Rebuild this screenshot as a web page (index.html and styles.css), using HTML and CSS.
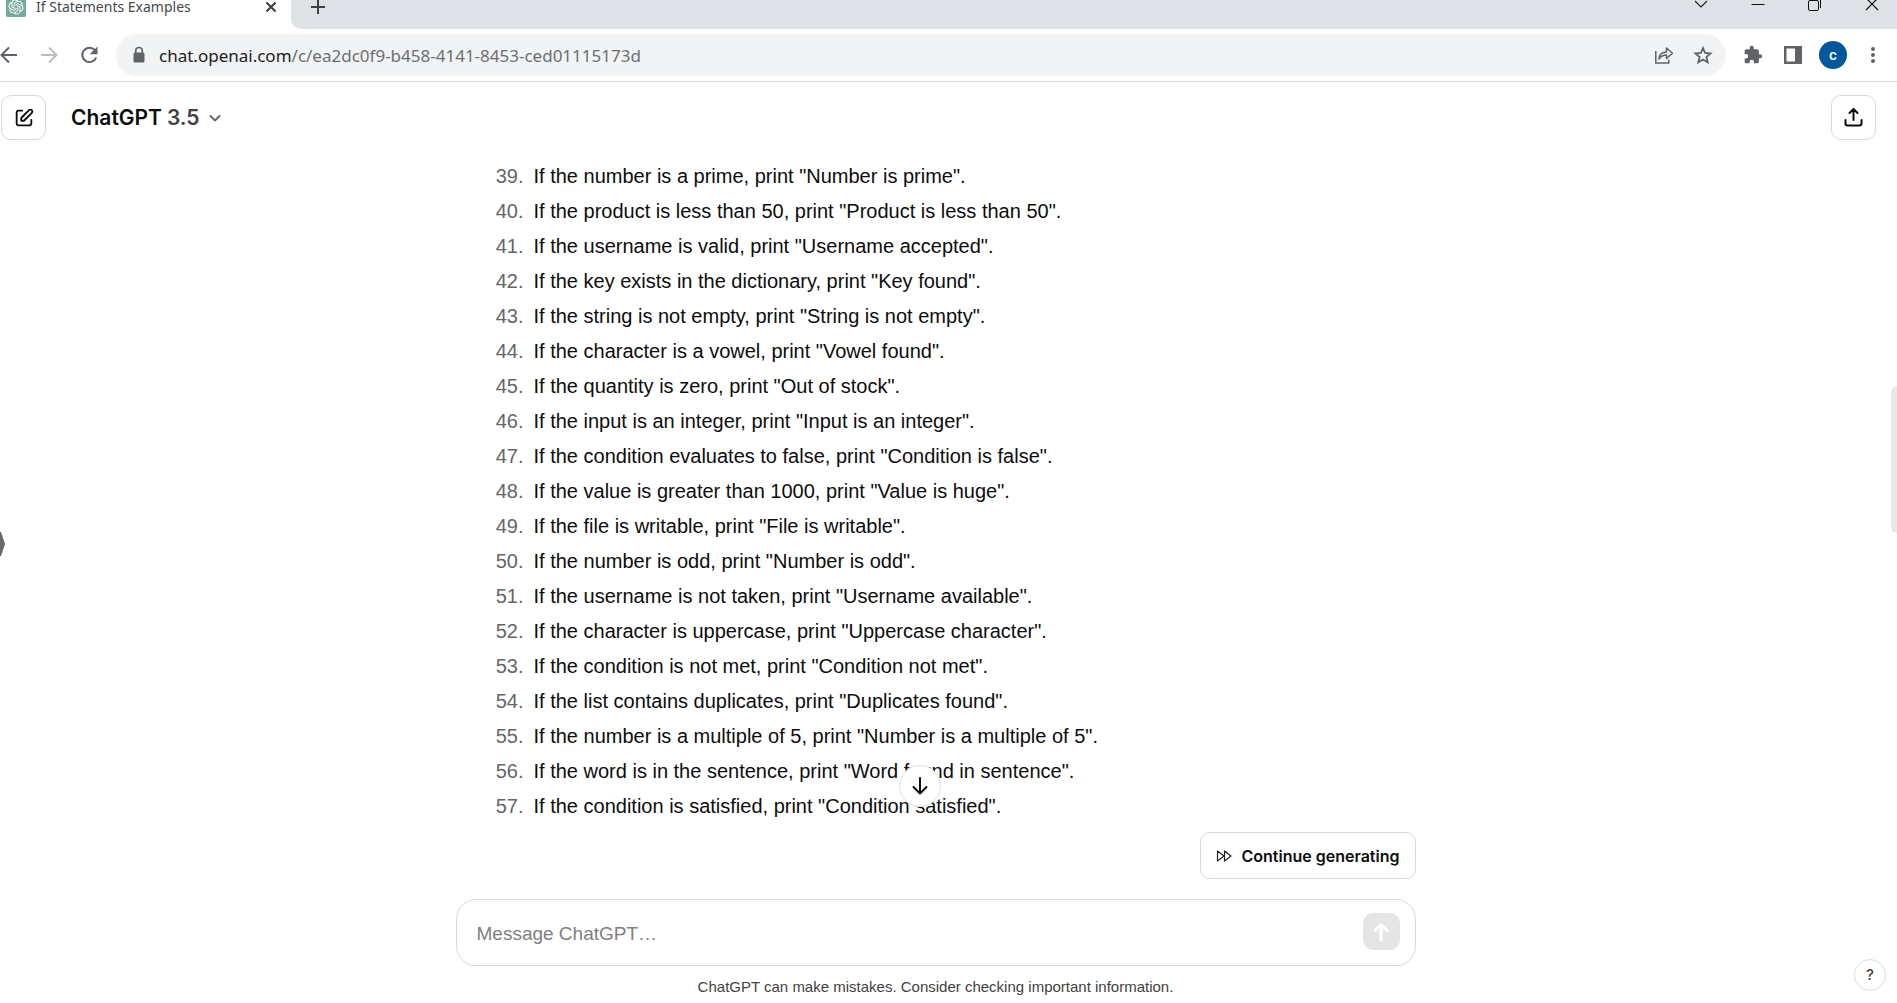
FILE: index.html
```html
<!DOCTYPE html>
<html lang="en">
<head>
<meta charset="utf-8">
<title>If Statements Examples</title>
<link rel="stylesheet" href="styles.css">
</head>
<body>
<div class="tabstrip">
  <div class="tab">
    <svg class="favicon" viewBox="0 0 24 24"><rect width="24" height="24" rx="2" fill="#74aa9c"/><path fill="#fff" transform="translate(3 3) scale(.75)" d="M22.2819 9.8211a5.9847 5.9847 0 0 0-.5157-4.9108 6.0462 6.0462 0 0 0-6.5098-2.9A6.0651 6.0651 0 0 0 4.9807 4.1818a5.9847 5.9847 0 0 0-3.9977 2.9 6.0462 6.0462 0 0 0 .7427 7.0966 5.98 5.98 0 0 0 .511 4.9107 6.051 6.051 0 0 0 6.5146 2.9001A5.9847 5.9847 0 0 0 13.2599 24a6.0557 6.0557 0 0 0 5.7718-4.2058 5.9894 5.9894 0 0 0 3.9977-2.9001 6.0557 6.0557 0 0 0-.7475-7.0729zm-9.022 12.6081a4.4755 4.4755 0 0 1-2.8764-1.0408l.1419-.0804 4.7783-2.7582a.7948.7948 0 0 0 .3927-.6813v-6.7369l2.02 1.1686a.071.071 0 0 1 .038.052v5.5826a4.504 4.504 0 0 1-4.4945 4.4944zm-9.6607-4.1254a4.4708 4.4708 0 0 1-.5346-3.0137l.142.0852 4.783 2.7582a.7712.7712 0 0 0 .7806 0l5.8428-3.3685v2.3324a.0804.0804 0 0 1-.0332.0615L9.74 19.9502a4.4992 4.4992 0 0 1-6.1408-1.6464zM2.3408 7.8956a4.485 4.485 0 0 1 2.3655-1.9728V11.6a.7664.7664 0 0 0 .3879.6765l5.8144 3.3543-2.0201 1.1685a.0757.0757 0 0 1-.071 0l-4.8303-2.7865A4.504 4.504 0 0 1 2.3408 7.872zm16.5963 3.8558L13.1038 8.364 15.1192 7.2a.0757.0757 0 0 1 .071 0l4.8303 2.7913a4.4944 4.4944 0 0 1-.6765 8.1042v-5.6772a.79.79 0 0 0-.407-.667zm2.0107-3.0231l-.142-.0852-4.7735-2.7818a.7759.7759 0 0 0-.7854 0L9.409 9.2297V6.8974a.0662.0662 0 0 1 .0284-.0615l4.8303-2.7866a4.4992 4.4992 0 0 1 6.6802 4.66zM8.3065 12.863l-2.02-1.1638a.0804.0804 0 0 1-.038-.0567V6.0742a4.4992 4.4992 0 0 1 7.3757-3.4537l-.142.0805L8.704 5.459a.7948.7948 0 0 0-.3927.6813zm1.0976-2.3654l2.602-1.4998 2.6069 1.4998v2.9994l-2.5974 1.4997-2.6067-1.4997Z"/></svg>
    <span class="tab-title">If Statements Examples</span>
    <button class="plain" aria-label="Close tab"><svg width="20" height="20" viewBox="0 0 20 20" fill="none" stroke="#3c4043" stroke-width="2"><path d="M5.500 5.500l9 9M14.500 5.500l-9 9"/></svg></button>
  </div>
  <div class="strip-rest">
    <button class="plain" aria-label="New tab"><svg width="20" height="20" viewBox="0 0 20 20" fill="none" stroke="#3c4043" stroke-width="2"><path d="M10 3v14M3 10h14"/></svg></button>
    <div class="window-buttons">
      <button class="plain" aria-label="Search tabs"><svg width="20" height="20" viewBox="0 0 20 20" fill="none" stroke="#222" stroke-width="1.200"><path d="M4 8l6 6 6-6"/></svg></button>
      <button class="plain" aria-label="Minimize"><svg width="20" height="20" viewBox="0 0 20 20" fill="none" stroke="#111" stroke-width="1"><path d="M3.500 11.500h13"/></svg></button>
      <button class="plain" aria-label="Restore"><svg width="20" height="20" viewBox="0 0 20 20" fill="none" stroke="#111" stroke-width="1"><rect x="3.500" y="7.500" width="10" height="10" rx="1.500"/><path d="M6 4.500h7.500q2 0 2 2V15"/></svg></button>
      <button class="plain" aria-label="Close"><svg width="20" height="20" viewBox="0 0 20 20" fill="none" stroke="#111" stroke-width="1.200"><path d="M4 5l12 12M16 5L4 17"/></svg></button>
    </div>
  </div>
</div>

<div class="toolbar">
  <div class="nav-buttons">
    <button class="plain" aria-label="Back"><svg width="20" height="20" viewBox="0 0 20 20" fill="none" stroke="#5f6368" stroke-width="2"><path d="M17 10H2M9 2.500L1.500 10 9 17.500"/></svg></button>
    <button class="plain" aria-label="Forward"><svg width="20" height="20" viewBox="0 0 20 20" fill="none" stroke="#babcbe" stroke-width="2"><path d="M1 10h15M9 2.500L16.500 10 9 17.500"/></svg></button>
    <button class="plain" aria-label="Reload"><svg width="20" height="20" viewBox="0 0 20 20"><path d="M14.800 5A7.200 7.200 0 1 0 16.200 12.500" fill="none" stroke="#5f6368" stroke-width="2"/><path d="M17.500 1.500v7.800H9.700z" fill="#5f6368"/></svg></button>
  </div>
  <div class="omnibox">
    <svg width="14" height="18" viewBox="0 0 14 18"><path d="M3.700 8V4.800a3.300 3.300 0 0 1 6.600 0V8" fill="none" stroke="#5f6368" stroke-width="1.700"/><rect x="1.500" y="6.500" width="11" height="10" rx="1.500" fill="#5f6368"/></svg>
    <span class="url"><b>chat.openai.com</b>/c/ea2dc0f9-b458-4141-8453-ced01115173d</span>
    <button class="plain" aria-label="Share this page"><svg width="20" height="20" viewBox="0 0 20 20" fill="none" stroke="#5f6368" stroke-width="1.500"><path d="M1.800 6v12h13v-3.500"/><path d="M5 14c.3-5 3-7 7.500-7V3l6 5.300-6 5.200v-3.600C9 9.900 6.800 11 5 14z" stroke-linejoin="round"/></svg></button>
    <button class="plain" aria-label="Bookmark"><svg width="20" height="20" viewBox="0 0 20 20" fill="none" stroke="#5f6368" stroke-width="1.800"><path d="M10 3l2.100 5 5.400.5-4.100 3.500 1.300 5.300L10 14.500l-4.700 2.800L6.600 12 2.500 8.500 7.900 8z"/></svg></button>
  </div>
  <div class="extensions">
    <button class="plain puzzle" aria-label="Extensions"><svg width="20" height="20" viewBox="0 0 24 24"><path fill="#5f6368" d="M20.500 11H19V7c0-1.100-.9-2-2-2h-4V3.500a2.500 2.500 0 0 0-5 0V5H4c-1.100 0-2 .9-2 2v3.800h1.500a2.700 2.700 0 0 1 0 5.400H2V20c0 1.100.9 2 2 2h3.800v-1.500a2.700 2.700 0 0 1 5.400 0V22H17c1.100 0 2-.9 2-2v-4h1.500a2.500 2.500 0 0 0 0-5z"/></svg></button>
    <button class="plain" aria-label="Side panel"><svg width="20" height="20" viewBox="0 0 20 20"><path fill="#5f6368" fill-rule="evenodd" d="M1 1h18v18H1zM3.500 3.500v13H12v-13z"/></svg></button>
    <button class="avatar" aria-label="Profile">c</button>
    <button class="plain" aria-label="Menu"><svg width="20" height="20" viewBox="0 0 20 20" fill="#5f6368"><circle cx="10" cy="4" r="2"/><circle cx="10" cy="10" r="2"/><circle cx="10" cy="16" r="2"/></svg></button>
  </div>
</div>

<div class="app">
  <header class="header">
    <button class="square" aria-label="New chat"><svg width="22" height="22" viewBox="0 0 24 24"><path fill="#0d0d0d" d="M16.7929 2.79289C18.0118 1.57394 19.9882 1.57394 21.2071 2.79289C22.4261 4.01184 22.4261 5.98815 21.2071 7.20711L12.7071 15.7071C12.5196 15.8946 12.2652 16 12 16H9C8.44772 16 8 15.5523 8 15V12C8 11.7348 8.10536 11.4804 8.29289 11.2929L16.7929 2.79289ZM19.7929 4.20711C19.355 3.7692 18.645 3.7692 18.2071 4.2071L10 12.4142V14H11.5858L19.7929 5.79289C20.2308 5.35499 20.2308 4.64501 19.7929 4.20711ZM6 5C5.44772 5 5 5.44771 5 6V18C5 18.5523 5.44772 19 6 19H18C18.5523 19 19 18.5523 19 18V14C19 13.4477 19.4477 13 20 13C20.5523 13 21 13.4477 21 14V18C21 19.6569 19.6569 21 18 21H6C4.34315 21 3 19.6569 3 18V6C3 4.34314 4.34315 3 6 3H10C10.5523 3 11 3.44771 11 4C11 4.55228 10.5523 5 10 5H6Z"/></svg></button>
    <button class="model">ChatGPT <span>3.5</span><svg width="20" height="20" viewBox="0 0 20 20" fill="none" stroke="#666" stroke-width="2" stroke-linecap="round" stroke-linejoin="round"><path d="M5.500 8l4.500 4.500L14.500 8"/></svg></button>
    <button class="square share" aria-label="Share chat"><svg width="22" height="22" viewBox="0 0 22 22" fill="none" stroke="#0d0d0d" stroke-width="2" stroke-linecap="round" stroke-linejoin="round"><path d="M10.500 13V2M6.500 6l4-4 4 4M2.500 13v3.500a2 2 0 0 0 2 2h12a2 2 0 0 0 2-2V13"/></svg></button>
  </header>

  <main class="thread">
    <ol class="answers" start="39">
      <li>If the number is a prime, print "Number is prime".</li>
      <li>If the product is less than 50, print "Product is less than 50".</li>
      <li>If the username is valid, print "Username accepted".</li>
      <li>If the key exists in the dictionary, print "Key found".</li>
      <li>If the string is not empty, print "String is not empty".</li>
      <li>If the character is a vowel, print "Vowel found".</li>
      <li>If the quantity is zero, print "Out of stock".</li>
      <li>If the input is an integer, print "Input is an integer".</li>
      <li>If the condition evaluates to false, print "Condition is false".</li>
      <li>If the value is greater than 1000, print "Value is huge".</li>
      <li>If the file is writable, print "File is writable".</li>
      <li>If the number is odd, print "Number is odd".</li>
      <li>If the username is not taken, print "Username available".</li>
      <li>If the character is uppercase, print "Uppercase character".</li>
      <li>If the condition is not met, print "Condition not met".</li>
      <li>If the list contains duplicates, print "Duplicates found".</li>
      <li>If the number is a multiple of 5, print "Number is a multiple of 5".</li>
      <li>If the word is in the sentence, print "Word found in sentence".</li>
      <li>If the condition is satisfied, print "Condition satisfied".</li>
    </ol>
    <button class="scroll-down" aria-label="Scroll to bottom"><svg width="22" height="22" viewBox="0 0 22 22" fill="none" stroke="#0d0d0d" stroke-width="2" stroke-linecap="round" stroke-linejoin="round"><path d="M11 3v15M4.500 12L11 18.500 17.500 12"/></svg></button>
  </main>

  <form class="composer">
    <button type="button" class="continue"><svg width="16" height="14" viewBox="0 0 16 14" fill="none" stroke="#222" stroke-width="1.200" stroke-linejoin="round"><path d="M1.500 2v10L8 7zM8.500 2v10L15 7z"/></svg>Continue generating</button>
    <div class="message">
      <input type="text" aria-label="Message ChatGPT" placeholder="Message ChatGPT…">
      <button type="button" class="send" aria-label="Send"><svg width="24" height="24" viewBox="0 0 24 24" fill="none" stroke="#fff" stroke-width="3" stroke-linecap="round" stroke-linejoin="round"><path d="M12 20V5M6 10.500L12 4.500l6 6"/></svg></button>
    </div>
    <p class="note">ChatGPT can make mistakes. Consider checking important information.</p>
  </form>

  <svg class="sidebar-handle" width="5" height="24" viewBox="0 0 5 24"><path d="M0 0h1l4 12-4 12H0z" fill="#686868"/></svg>
  <div class="scroll-thumb"></div>
  <button class="help" aria-label="Help">?</button>
</div>
</body>
</html>
```
FILE: styles.css
```css
* { box-sizing: border-box; }

body {
  margin: 0;
  min-height: 100vh;
  display: flex;
  flex-direction: column;
  background: #fff;
  color: #0d0d0d;
  font-family: "Liberation Sans", Arial, sans-serif;
}

button {
  font: inherit;
  color: inherit;
  margin: 0;
  padding: 0;
  background: none;
  border: 0;
  cursor: pointer;
}

svg { display: block; flex: none; }

.plain { flex: none; width: 20px; height: 20px; }

/* Browser tabs */
.tabstrip {
  height: 29px;
  display: flex;
  overflow: hidden;
}

.tab {
  width: 291px;
  height: 14px;
  padding: 0 10px 0 6px;
  display: flex;
  align-items: center;
}

.favicon { width: 20px; height: 20px; }

.tab-title {
  flex: 1;
  padding-left: 10px;
  font: 14px/20px "Noto Sans", sans-serif;
  color: #45494d;
  white-space: nowrap;
}

.strip-rest {
  flex: 1;
  display: flex;
  justify-content: space-between;
  padding: 0 15px 16px 17px;
  align-items: center;
  background: #dee1e6;
  border-bottom-left-radius: 10px;
}

.window-buttons { display: flex; gap: 37px; padding-bottom: 8px; }

/* Address bar */
.toolbar {
  height: 53px;
  display: flex;
  align-items: center;
  border-bottom: 1px solid #d5d7da;
}

.nav-buttons { display: flex; gap: 20px; width: 116px; }

.omnibox {
  flex: 1;
  height: 42px;
  display: flex;
  align-items: center;
  gap: 19px;
  padding: 0 13px 0 16px;
  border-radius: 21px;
  background: #f1f3f4;
}

.url {
  flex: 1;
  margin-left: -6px;
  padding-top: 2px;
  font: 17px/24px "Noto Sans", sans-serif;
  color: #6b6f73;
  white-space: nowrap;
}

.url b { font-weight: 400; color: #202124; }

.extensions {
  display: flex;
  align-items: center;
  gap: 16px;
  padding: 0 14px 0 17px;
}

.puzzle { margin-right: 4px; }

.avatar {
  width: 28px;
  height: 28px;
  border-radius: 50%;
  background: #01579b;
  color: #fff;
  font: 500 15px/26px Roboto, sans-serif;
}

/* Chat page */
.app {
  position: relative;
  flex: 1;
  display: flex;
  flex-direction: column;
}

.header {
  display: flex;
  align-items: center;
  padding: 13px 21px 19px 1px;
}

.square {
  width: 45px;
  height: 45px;
  display: grid;
  place-items: center;
  border: 1px solid #d9d9d9;
  border-radius: 10px;
}

.model {
  display: flex;
  align-items: center;
  gap: 5px;
  margin-left: 25px;
  font: 600 21px/32px Inter, sans-serif;
}

.model span { color: #424242; }

.share { margin-left: auto; }

.thread, .composer {
  position: relative;
  width: calc(100% - 25px);
  max-width: 960px;
  margin: 0 auto;
  left: -13px;
}

.answers {
  margin: 0;
  padding: 0 0 0 38px;
  counter-reset: item 38;
  list-style: none;
  font-size: 20px;
  line-height: 35px;
}

.answers li {
  display: flex;
  gap: 10px;
  counter-increment: item;
}

.answers li::before {
  content: counter(item) ".";
  width: 30px;
  text-align: right;
  color: #666;
}

.scroll-down {
  position: absolute;
  left: 50%;
  bottom: 17px;
  width: 42px;
  height: 42px;
  margin-left: -37px;
  display: grid;
  place-items: center;
  border: 1px solid #e0e0e0;
  border-radius: 50%;
  background: #fff;
}

.composer {
  margin-top: auto;
  display: flex;
  flex-direction: column;
}

.continue {
  align-self: flex-end;
  height: 47px;
  padding: 0 15px;
  display: flex;
  align-items: center;
  gap: 10px;
  border: 1px solid #d9d9d9;
  border-radius: 10px;
  font: 600 16px/24px Inter, sans-serif;
}

.message {
  margin-top: 20px;
  height: 67px;
  padding: 0 15px 2px 20px;
  display: flex;
  align-items: center;
  border: 1px solid #d9d9d9;
  border-radius: 20px;
}

.message input {
  flex: 1;
  min-width: 0;
  padding: 4px 0 0;
  border: 0;
  outline: 0;
  font: 19px/30px "Liberation Sans", Arial, sans-serif;
}

.message input::placeholder { color: #808080; opacity: 1; }

.send {
  width: 37px;
  height: 37px;
  display: grid;
  place-items: center;
  border-radius: 10px;
  background: #e5e5e5;
}

.note {
  margin: 11px 0 6px;
  text-align: center;
  font-size: 15px;
  line-height: 20px;
  color: #424242;
}

.sidebar-handle { position: absolute; left: 0; top: 450px; }

.scroll-thumb {
  position: absolute;
  right: 0;
  top: 304px;
  width: 6px;
  height: 147px;
  border-radius: 6px 0 0 6px;
  background: #e8e8e8;
}

.help {
  position: absolute;
  right: 11px;
  bottom: 12px;
  width: 32px;
  height: 32px;
  border: 1px solid #ddd;
  border-radius: 50%;
  color: #424242;
  font: 500 15px/28px Inter, sans-serif;
}
```
